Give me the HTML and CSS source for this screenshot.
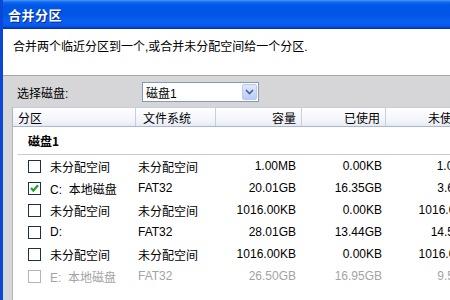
FILE: index.html
```html
<!DOCTYPE html>
<html>
<head>
<meta charset="utf-8">
<link rel="stylesheet" href="styles.css">
</head>
<body>
<div class="window">
  <div class="titlebar"><span class="title">合并分区</span></div>
  <div class="desc">合并两个临近分区到一个,或合并未分配空间给一个分区.</div>
  <div class="panel">
    <div class="select-row">
      <span class="select-label">选择磁盘:</span>
      <div class="combo">
        <span class="combo-text">磁盘1</span>
        <span class="combo-btn">
          <svg width="9" height="6" viewBox="0 0 9 6"><path d="M1 1 L4.5 4.5 L8 1" fill="none" stroke="#4d6185" stroke-width="1.6"/></svg>
        </span>
      </div>
    </div>
    <div class="list">
      <div class="head">
        <div class="hc c1">分区</div>
        <div class="hc c2">文件系统</div>
        <div class="hc c3 r">容量</div>
        <div class="hc c4 r">已使用</div>
        <div class="hc c5 r">未使用</div>
      </div>
      <div class="group"><span class="group-name">磁盘1</span></div>
      <div class="row">
        <div class="c c1"><span class="cb"></span>未分配空间</div>
        <div class="c c2">未分配空间</div>
        <div class="c c3 r">1.00MB</div>
        <div class="c c4 r">0.00KB</div>
        <div class="c c5 r">1.00MB</div>
      </div>
      <div class="row">
        <div class="c c1"><span class="cb"><svg width="11" height="11" viewBox="0 0 11 11"><path d="M2 5 L4.3 7.6 L9 2.2" fill="none" stroke="#21a121" stroke-width="2.2"/></svg></span>C:&nbsp; 本地磁盘</div>
        <div class="c c2">FAT32</div>
        <div class="c c3 r">20.01GB</div>
        <div class="c c4 r">16.35GB</div>
        <div class="c c5 r">3.66GB</div>
      </div>
      <div class="row">
        <div class="c c1"><span class="cb"></span>未分配空间</div>
        <div class="c c2">未分配空间</div>
        <div class="c c3 r">1016.00KB</div>
        <div class="c c4 r">0.00KB</div>
        <div class="c c5 r">1016.00KB</div>
      </div>
      <div class="row">
        <div class="c c1"><span class="cb"></span>D:</div>
        <div class="c c2">FAT32</div>
        <div class="c c3 r">28.01GB</div>
        <div class="c c4 r">13.44GB</div>
        <div class="c c5 r">14.57GB</div>
      </div>
      <div class="row">
        <div class="c c1"><span class="cb"></span>未分配空间</div>
        <div class="c c2">未分配空间</div>
        <div class="c c3 r">1016.00KB</div>
        <div class="c c4 r">0.00KB</div>
        <div class="c c5 r">1016.00KB</div>
      </div>
      <div class="row disabled">
        <div class="c c1"><span class="cb"></span>E:&nbsp; 本地磁盘</div>
        <div class="c c2">FAT32</div>
        <div class="c c3 r">26.50GB</div>
        <div class="c c4 r">16.95GB</div>
        <div class="c c5 r">9.55GB</div>
      </div>
    </div>
  </div>
</div>
</body>
</html>
```
FILE: styles.css
```css
html, body {
  margin: 0;
  padding: 0;
  background: #ffffff;
}
body {
  font-family: "Liberation Sans", "Noto Sans CJK SC", sans-serif;
  font-size: 12px;
  color: #000;
}
.window {
  width: 450px;
  height: 300px;
  overflow: hidden;
  display: flex;
  flex-direction: column;
  border-left: 3px solid #0b46d6;
  box-sizing: border-box;
}
.titlebar {
  height: 29px;
  flex: none;
  display: flex;
  align-items: center;
  margin-left: -3px;
  padding-left: 8px;
  background: linear-gradient(#4a9cff 0, #1569ee 2px, #0058e8 5px, #0055e6 14px, #0a60f2 22px, #0757ea 26px, #003cc4 28px, #00309f 29px);
}
.title {
  color: #fff;
  font-family: "Noto Sans CJK SC", sans-serif;
  font-weight: bold;
  font-size: 13px;
  text-shadow: 1px 1px 0 #0a2a8a;
  letter-spacing: 0.5px;
}
.desc {
  height: 47px;
  flex: none;
  box-sizing: border-box;
  padding: 9px 0 0 10px;
  line-height: 18px;
  background: #fff;
  border-bottom: 1px solid #a7a7a7;
  box-shadow: 0 1px 0 #ffffff;
}
.panel {
  flex: 1;
  min-height: 0;
  background: #d6d6d8;
  display: flex;
  flex-direction: column;
  padding: 1px 0 0 9px;
}
.select-row {
  height: 30px;
  flex: none;
  display: flex;
  align-items: center;
}
.select-label {
  width: 125px;
  padding-left: 5px;
}
.combo {
  width: 117px;
  height: 20px;
  box-sizing: border-box;
  border: 1px solid #7f9db9;
  background: #fff;
  display: flex;
  align-items: center;
  justify-content: space-between;
  padding: 0 1px 0 3px;
}
.combo-btn {
  width: 15px;
  height: 16px;
  box-sizing: border-box;
  border: 1px solid #b9c9ef;
  border-radius: 2px;
  background: linear-gradient(#dfe8fd, #b9cdf7);
  display: flex;
  align-items: center;
  justify-content: center;
}
.list {
  flex: 1;
  min-width: 0;
  overflow: hidden;
  background: #fff;
  border-left: 1px solid #aab4c6;
}
.head {
  height: 20px;
  display: flex;
  background: linear-gradient(#ffffff, #f2f4fa 70%, #e6eaf3);
  border-top: 1px solid #c5cedf;
  border-bottom: 1px solid #a9b6cc;
  box-sizing: border-box;
}
.hc {
  flex: none;
  display: flex;
  align-items: center;
  box-sizing: border-box;
  border-right: 1px solid #c8cfdc;
  white-space: nowrap;
}
.c1 { width: 123px; }
.c2 { width: 80px; }
.c3 { width: 86px; }
.c4 { width: 84px; }
.c5 { width: 98px; }
.hc.c1 { padding-left: 5px; }
.hc.c2 { padding-left: 7px; }
.hc.r { justify-content: flex-end; padding-right: 5px; }
.hc.c5 { padding-right: 20px; border-right: none; }
.group {
  height: 28px;
  display: flex;
  align-items: center;
  margin-left: 5px;
  border-bottom: 1px solid #c9ccd2;
  box-sizing: border-box;
  padding-left: 10px;
}
.group-name {
  font-family: "Noto Sans CJK SC", sans-serif;
  font-weight: bold;
}
.row {
  height: 22px;
  display: flex;
}
.c {
  display: flex;
  align-items: center;
  box-sizing: border-box;
  white-space: nowrap;
  flex: none;
}
.c.c1 { padding-left: 15px; }
.c.c2 { padding-left: 2px; }
.c.r { justify-content: flex-end; padding-right: 5px; }
.c.c3 { padding-right: 6px; }
.c.c4 { padding-right: 4px; }
.c.c5 { padding-right: 6px; }
.cb {
  width: 13px;
  height: 13px;
  box-sizing: border-box;
  border: 1px solid #1c2f4a;
  background: #fff;
  margin-right: 9px;
  display: flex;
  align-items: center;
  justify-content: center;
}
.disabled { color: #a4a4a4; }
.disabled .cb { border-color: #b4b4b4; }
```
